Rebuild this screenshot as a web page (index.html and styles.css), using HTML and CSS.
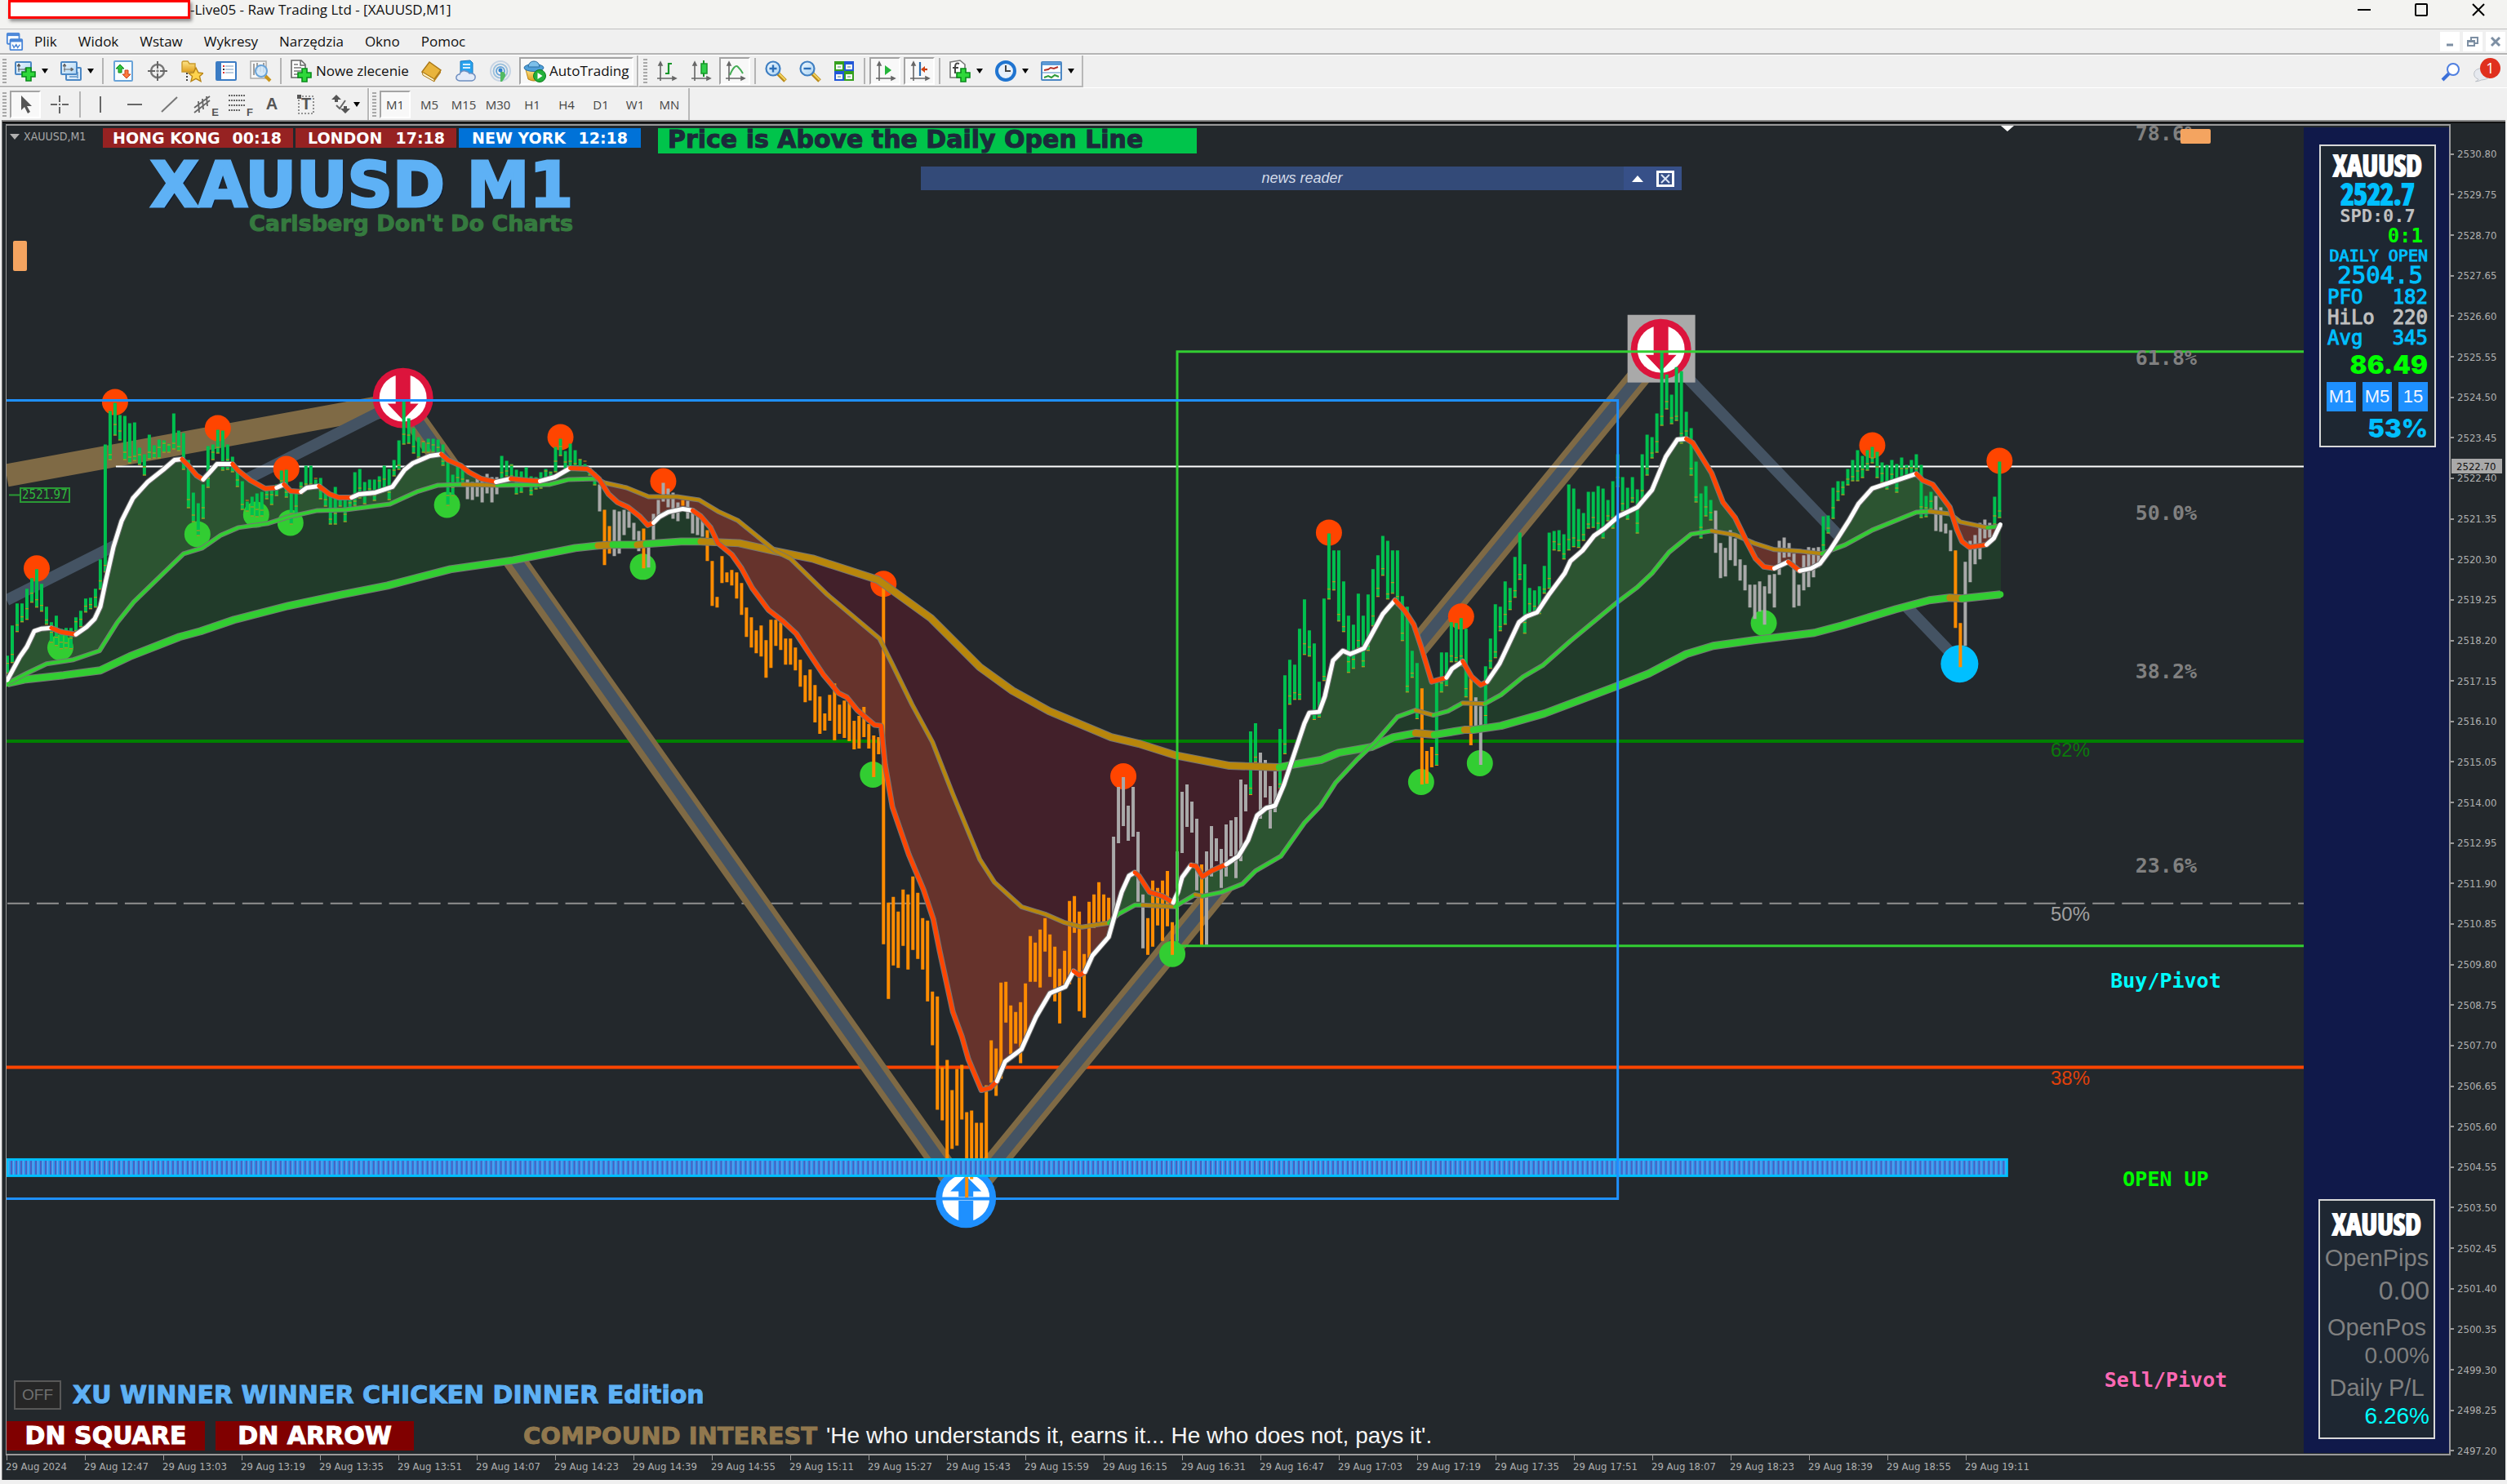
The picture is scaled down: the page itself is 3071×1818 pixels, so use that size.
FILE: index.html
```html
<!DOCTYPE html>
<html lang="pl">
<head>
<meta charset="utf-8">
<title>Live05 - Raw Trading Ltd - [XAUUSD,M1]</title>
<link rel="stylesheet" href="styles.css">
</head>
<body>
<svg class="symbols" aria-hidden="true">
  <defs>
    <linearGradient id="gold" x1="0" y1="0" x2="0" y2="1"><stop offset="0" stop-color="#ffe68a"/><stop offset="1" stop-color="#e0a020"/></linearGradient>
    <linearGradient id="sky" x1="0" y1="0" x2="1" y2="1"><stop offset="0" stop-color="#f2faff"/><stop offset="1" stop-color="#a9d2f3"/></linearGradient>
    <symbol id="plus" viewBox="0 0 18 18"><path d="M6 1h6v5h5v6h-5v5H6v-5H1V6h5z" fill="#2fd83a" stroke="#0a8a1c" stroke-width="1.6"/></symbol>
    <symbol id="i-app" viewBox="0 0 24 24"><rect x="2" y="1" width="16" height="14" rx="1" fill="#fff" stroke="#4a86d8" stroke-width="2"/><path d="M2 3h16" stroke="#4a86d8" stroke-width="3"/><rect x="6" y="9" width="16" height="14" rx="1" fill="#fff" stroke="#4a86d8" stroke-width="2"/><path d="M6 11h16" stroke="#4a86d8" stroke-width="3"/><path d="M9 16l2 4 3-4 2 4 3-4" fill="none" stroke="#4a86d8" stroke-width="1.6"/></symbol>
    <symbol id="i-newchart" viewBox="0 0 28 28"><rect x="2" y="3" width="19" height="15" rx="1" fill="url(#sky)" stroke="#4b87c4" stroke-width="2"/><path d="M6 6v9M5 12h11M6 5l-2 3h4zM17 12l-3-2v4z" fill="#555" stroke="#555"/><use href="#plus" x="9" y="9" width="18" height="18"/></symbol>
    <symbol id="i-profiles" viewBox="0 0 28 28"><rect x="8" y="10" width="18" height="15" rx="1" fill="#dcecf9" stroke="#4b87c4" stroke-width="2"/><path d="M12 21h10M22 15v8" stroke="#7aa9d6" stroke-width="2"/><rect x="2" y="3" width="19" height="15" rx="1" fill="url(#sky)" stroke="#4b87c4" stroke-width="2"/><path d="M6 6v9M5 12h11M6 5l-2 3h4zM17 12l-3-2v4z" fill="#666" stroke="#666"/></symbol>
    <symbol id="i-market" viewBox="0 0 28 28"><rect x="3" y="2" width="22" height="24" rx="1" fill="#f8fcff" stroke="#69a3d8" stroke-width="2"/><path d="M10 6l5 5h-3v5H8v-5H5z" fill="#30c23a" stroke="#108a1c"/><path d="M18 23l-5-5h3v-5h4v5h3z" fill="#ff7a3c" stroke="#c8401a"/></symbol>
    <symbol id="i-cross" viewBox="0 0 28 28"><circle cx="14" cy="14" r="8" fill="none" stroke="#777" stroke-width="2.4"/><path d="M14 2v9M14 17v9M2 14h9M17 14h9" stroke="#666" stroke-width="2"/><path d="M12 14h4M14 12v4" stroke="#666" stroke-width="1"/></symbol>
    <symbol id="i-fav" viewBox="0 0 28 28"><path d="M2 4q0-2 2-2h5l2 3h7v10H2z" fill="url(#gold)" stroke="#c99a2c" stroke-width="1.4"/><path d="M8 16v10" stroke="#444" stroke-width="2" stroke-dasharray="2 2"/><path d="M19 10l3 6 6 .6-4.500 4 1.500 6-6-3.200-6 3.200 1.500-6-4.500-4 6-.6z" fill="#ffd34d" stroke="#b98516" stroke-width="1.400"/></symbol>
    <symbol id="i-nav" viewBox="0 0 28 28"><rect x="2" y="3" width="24" height="22" rx="1" fill="#fff" stroke="#3b7cc4" stroke-width="2"/><path d="M3 4h5v20H3z" fill="#3b7cc4"/><path d="M13 8h10M13 12h10M13 16h10" stroke="#bcd" stroke-width="2"/><path d="M10 8h2M10 16h2" stroke="#d33" stroke-width="2"/><path d="M10 12h2" stroke="#333" stroke-width="2"/></symbol>
    <symbol id="i-tester" viewBox="0 0 28 28"><rect x="2" y="2" width="19" height="21" fill="#f7f7f7" stroke="#aaa" stroke-width="1.500"/><path d="M6 5v14M10 4v10M14 6v9M18 4v12" stroke="#888" stroke-width="1.600"/><path d="M20 20l6 6" stroke="#c8941c" stroke-width="4"/><circle cx="15" cy="14" r="7" fill="#cfe6fa" fill-opacity=".85" stroke="#69a3d8" stroke-width="2"/></symbol>
    <symbol id="i-order" viewBox="0 0 28 28"><path d="M2 1h12l5 5v16H2z" fill="#fff" stroke="#666" stroke-width="1.600"/><path d="M13 1v6h6" fill="none" stroke="#666" stroke-width="1.500"/><path d="M5 6h5M5 10h9M5 14h9M5 18h5" stroke="#777" stroke-width="1.600"/><use href="#plus" x="9" y="10" width="18" height="18"/></symbol>
    <symbol id="i-book" viewBox="0 0 28 28"><path d="M2 15L11 3l14 10-8 11z" fill="#e9b43c" stroke="#a97818" stroke-width="1.400"/><path d="M2 15l15 9v3L3 19z" fill="#fff3c8" stroke="#a97818"/><path d="M17 24l8-11v3l-8 11z" fill="#b8801a"/></symbol>
    <symbol id="i-cloud" viewBox="0 0 28 28"><path d="M7 2l12-1 3 3v14H7z" fill="#29a3ee" stroke="#1a78bf"/><path d="M10 6h9M10 10h9" stroke="#d8f0ff" stroke-width="2"/><path d="M6 26q-5-1-4-5 1-3 4-3 2-5 7-4 4 1 5 3 5-1 7 3 1 5-4 6z" fill="#e3ebf8" stroke="#6f8fc0" stroke-width="1.500"/></symbol>
    <symbol id="i-signal" viewBox="0 0 28 28"><circle cx="14" cy="14" r="12" fill="none" stroke="#c6d4e4" stroke-width="2"/><circle cx="14" cy="14" r="8.500" fill="none" stroke="#9cc0dc" stroke-width="2"/><circle cx="14" cy="14" r="5" fill="none" stroke="#6aa6d8" stroke-width="2"/><path d="M14 14q11 2 2 13h-2z" fill="#52ba62"/><circle cx="14" cy="13" r="2.500" fill="#2f7fca"/></symbol>
    <symbol id="i-auto" viewBox="0 0 28 28"><path d="M3 12h20l-3 12q-7 4-14 0z" fill="url(#gold)" stroke="#b98516"/><ellipse cx="13" cy="10" rx="12" ry="4.500" fill="#4f9fd8" stroke="#2c6fa4"/><path d="M6 9q1-7 7-7t7 7z" fill="#7cc0ea" stroke="#2c6fa4"/><circle cx="20" cy="20" r="7.500" fill="#24b13a" stroke="#0c7a1e"/><path d="M17.500 16v8l6-4z" fill="#fff"/></symbol>
    <symbol id="axes" viewBox="0 0 28 28"><path d="M7 4v22M3 23h22M7 3l-2 4h4zM26 23l-4-2v4z" fill="#666" stroke="#666" stroke-width="1.600"/></symbol>
    <symbol id="i-bars" viewBox="0 0 28 28"><use href="#axes"/><path d="M17 4v14M17 5h4M13 17h4" stroke="#17962a" stroke-width="2.200"/></symbol>
    <symbol id="i-candle" viewBox="0 0 28 28"><use href="#axes"/><path d="M18 1v20" stroke="#17962a" stroke-width="2"/><rect x="15" y="5" width="7" height="12" fill="#2fd04a" stroke="#17962a" stroke-width="1.500"/></symbol>
    <symbol id="i-line" viewBox="0 0 28 28"><use href="#axes"/><path d="M8 19q6-14 10-10t6 8" fill="none" stroke="#44ad55" stroke-width="2"/></symbol>
    <symbol id="lens" viewBox="0 0 28 28"><path d="M17 17l9 9" stroke="#b98a1a" stroke-width="5"/><path d="M18 17l8 8" stroke="#f4d35e" stroke-width="2"/><circle cx="11" cy="11" r="8.500" fill="url(#sky)" stroke="#3f7fc2" stroke-width="2.200"/></symbol>
    <symbol id="i-zoomin" viewBox="0 0 28 28"><use href="#lens"/><path d="M6.500 11h9M11 6.500v9" stroke="#2d6fb8" stroke-width="2.400"/></symbol>
    <symbol id="i-zoomout" viewBox="0 0 28 28"><use href="#lens"/><path d="M6.500 11h9" stroke="#2d6fb8" stroke-width="2.400"/></symbol>
    <symbol id="i-tile" viewBox="0 0 28 28"><path d="M2 2h12v12H2zM14 14h12v12H14z" fill="#35a01e"/><path d="M14 2h12v12H14zM2 14h12v12H2z" fill="#2257d8"/><path d="M4 6h8v6H4zM16 6h8v6h-8zM4 18h8v6H4zM16 18h8v6h-8z" fill="#f6fbf2"/><path d="M6 9h4M18 9h4M6 21h4M18 21h4" stroke="#8aa" stroke-width="1.500"/></symbol>
    <symbol id="i-scroll" viewBox="0 0 28 28"><use href="#axes"/><path d="M14 7l8 6-8 6z" fill="#25b53a"/></symbol>
    <symbol id="i-shift" viewBox="0 0 28 28"><use href="#axes"/><path d="M15 3v17" stroke="#2a6db0" stroke-width="2.200"/><path d="M24 12h-6" stroke="#c23a10" stroke-width="2.200"/><path d="M16 12l5-4v8z" fill="#d2420f"/></symbol>
    <symbol id="i-ind" viewBox="0 0 28 28"><path d="M2 3l12-2 6 5v16H2z" fill="#fff" stroke="#777" stroke-width="1.600"/><path d="M13 5q-5-2-5 4v8M5 10h7" fill="none" stroke="#444" stroke-width="2"/><use href="#plus" x="9" y="10" width="18" height="18"/></symbol>
    <symbol id="i-clock" viewBox="0 0 28 28"><circle cx="14" cy="14" r="11" fill="#e8f0fa" stroke="#1f74d0" stroke-width="4"/><path d="M14 7v7h6" fill="none" stroke="#444" stroke-width="2"/></symbol>
    <symbol id="i-tmpl" viewBox="0 0 28 28"><rect x="2" y="3" width="24" height="22" rx="1" fill="#fff" stroke="#4b87c4" stroke-width="2"/><path d="M3 5h22" stroke="#5d9ad6" stroke-width="4"/><path d="M5 13l5-1 3-2 4 1 5-2" fill="none" stroke="#b3322a" stroke-width="2"/><path d="M3 16h22" stroke="#4b87c4"/><path d="M5 22l5-2 4 2 4-3 5 2" fill="none" stroke="#2f9a3a" stroke-width="2"/></symbol>
    <symbol id="i-cursor" viewBox="0 0 28 28"><path d="M9 3v18l4-4 4 8 3-2-4-7h6z" fill="#555"/></symbol>
    <symbol id="i-plus" viewBox="0 0 28 28"><path d="M14 3v8M14 17v8M3 14h8M17 14h8M13 14h2" stroke="#666" stroke-width="2"/></symbol>
    <symbol id="i-v" viewBox="0 0 28 28"><path d="M14 4v20" stroke="#666" stroke-width="2"/></symbol>
    <symbol id="i-h" viewBox="0 0 28 28"><path d="M5 14h18" stroke="#666" stroke-width="2"/></symbol>
    <symbol id="i-t" viewBox="0 0 28 28"><path d="M5 23L24 5" stroke="#777" stroke-width="2"/></symbol>
    <symbol id="i-e" viewBox="0 0 28 28"><path d="M3 18L22 4M3 24L22 9M8 10l1 14M13 7l1 13M18 4l1 12" stroke="#666" stroke-width="1.800"/></symbol>
    <symbol id="i-f" viewBox="0 0 28 28"><path d="M3 3h21M3 9h21M3 15h21M3 21h14" stroke="#666" stroke-width="1.800" stroke-dasharray="2 1"/></symbol>
    <symbol id="i-box" viewBox="0 0 28 28"><rect x="5" y="4" width="18" height="21" fill="none" stroke="#777" stroke-width="1.600" stroke-dasharray="2 2"/><path d="M3 2h5v5H3z" fill="#555"/></symbol>
    <symbol id="i-arr" viewBox="0 0 28 28"><path d="M9 2l6 6H3zM7 8h4v3H7zM20 25l-6-6h12zM18 16h4v4h-4z" fill="#555"/><path d="M9 15l4 4 7-10" fill="none" stroke="#666" stroke-width="2"/></symbol>
  </defs>
</svg>

<header class="titlebar">
  <span class="redacted"></span>
  <h1 class="title">-Live05 - Raw Trading Ltd - [XAUUSD,M1]</h1>
  <div class="winctl">
    <button aria-label="Minimize"><svg viewBox="0 0 16 16"><path d="M0 8h16"/></svg></button>
    <button aria-label="Maximize"><svg viewBox="0 0 16 16"><rect x="1" y="1" width="14" height="14" rx="1"/></svg></button>
    <button aria-label="Close"><svg viewBox="0 0 16 16"><path d="M1 1l14 14M15 1L1 15"/></svg></button>
  </div>
</header>

<nav class="menubar">
  <svg class="appicon"><use href="#i-app"/></svg>
  <button>Plik</button><button>Widok</button><button>Wstaw</button><button>Wykresy</button><button>Narzędzia</button><button>Okno</button><button>Pomoc</button>
  <div class="mdi">
    <button aria-label="Minimize chart"><svg viewBox="0 0 14 14"><path d="M3 11h8" stroke-width="3"/></svg></button>
    <button aria-label="Restore chart"><svg viewBox="0 0 14 14"><path d="M5 5V2h8v7h-3M1 6h8v6H1zM1 7h8" stroke-width="2"/></svg></button>
    <button aria-label="Close chart"><svg viewBox="0 0 14 14"><path d="M2 2l10 10M12 2L2 12" stroke-width="3"/></svg></button>
  </div>
</nav>

<div class="toolbar">
  <div class="group">
    <i class="grip"></i>
    <button class="tool drop" aria-label="New chart"><svg><use href="#i-newchart"/></svg></button>
    <button class="tool drop" aria-label="Profiles"><svg><use href="#i-profiles"/></svg></button>
    <i class="sep"></i>
    <button class="tool" aria-label="Market watch"><svg><use href="#i-market"/></svg></button>
    <button class="tool" aria-label="Data window"><svg><use href="#i-cross"/></svg></button>
    <button class="tool" aria-label="Navigator"><svg><use href="#i-fav"/></svg></button>
    <button class="tool" aria-label="Terminal"><svg><use href="#i-nav"/></svg></button>
    <button class="tool" aria-label="Strategy tester"><svg><use href="#i-tester"/></svg></button>
    <i class="sep"></i>
    <button class="tool wide order"><svg><use href="#i-order"/></svg>Nowe zlecenie</button>
    <button class="tool" aria-label="MetaEditor"><svg><use href="#i-book"/></svg></button>
    <button class="tool" aria-label="Cloud"><svg><use href="#i-cloud"/></svg></button>
    <button class="tool" aria-label="Signals"><svg><use href="#i-signal"/></svg></button>
    <button class="tool wide on"><svg><use href="#i-auto"/></svg>AutoTrading</button>
  </div>
  <div class="group">
    <i class="grip"></i>
    <button class="tool" aria-label="Bar chart"><svg><use href="#i-bars"/></svg></button>
    <button class="tool" aria-label="Candlesticks"><svg><use href="#i-candle"/></svg></button>
    <button class="tool on" aria-label="Line chart"><svg><use href="#i-line"/></svg></button>
    <i class="sep"></i>
    <button class="tool" aria-label="Zoom in"><svg><use href="#i-zoomin"/></svg></button>
    <button class="tool" aria-label="Zoom out"><svg><use href="#i-zoomout"/></svg></button>
    <button class="tool" aria-label="Tile windows"><svg><use href="#i-tile"/></svg></button>
    <i class="sep"></i>
    <button class="tool on" aria-label="Auto scroll"><svg><use href="#i-scroll"/></svg></button>
    <button class="tool on" aria-label="Chart shift"><svg><use href="#i-shift"/></svg></button>
    <i class="sep"></i>
    <button class="tool drop" aria-label="Indicators"><svg><use href="#i-ind"/></svg></button>
    <button class="tool drop" aria-label="Periods"><svg><use href="#i-clock"/></svg></button>
    <button class="tool drop" aria-label="Templates"><svg><use href="#i-tmpl"/></svg></button>
  </div>
  <div class="alerts">
    <button aria-label="Search"><svg viewBox="0 0 24 24"><path d="M2 22l8-8" stroke="#3a6fd8" stroke-width="4"/><circle cx="15" cy="9" r="7" fill="#fff" stroke="#4f7fe0" stroke-width="2"/></svg></button>
    <button class="chat" aria-label="Messages"><svg viewBox="0 0 30 26"><path d="M4 22q4-1 4-3Q1 16 2 10T14 3q11 0 11 8t-13 9q-4 2-8 2z" fill="#e6e9ef" stroke="#b4b8c0"/></svg><b class="badge">1</b></button>
  </div>
</div>

<div class="toolbar second">
  <div class="group">
    <i class="grip"></i>
    <button class="tool on" aria-label="Cursor"><svg><use href="#i-cursor"/></svg></button>
    <button class="tool" aria-label="Crosshair"><svg><use href="#i-plus"/></svg></button>
    <i class="sep"></i>
    <button class="tool" aria-label="Vertical line"><svg><use href="#i-v"/></svg></button>
    <button class="tool" aria-label="Horizontal line"><svg><use href="#i-h"/></svg></button>
    <button class="tool" aria-label="Trend line"><svg><use href="#i-t"/></svg></button>
    <button class="tool" aria-label="Channel"><svg><use href="#i-e"/></svg><small>E</small></button>
    <button class="tool" aria-label="Fibonacci"><svg><use href="#i-f"/></svg><small>F</small></button>
    <button class="tool letter">A</button>
    <button class="tool letter boxed" aria-label="Text label"><svg><use href="#i-box"/></svg><b>T</b></button>
    <button class="tool drop short" aria-label="Arrows"><svg><use href="#i-arr"/></svg></button>
  </div>
  <div class="group periods">
    <i class="grip"></i>
    <button class="tool on">M1</button><button class="tool">M5</button><button class="tool">M15</button><button class="tool">M30</button><button class="tool">H1</button><button class="tool">H4</button><button class="tool">D1</button><button class="tool">W1</button><button class="tool">MN</button>
  </div>
</div>

<main class="chart">
  <section class="plot">
    <svg class="canvas" id="canvas" viewBox="7 153 2994 1629" preserveAspectRatio="none"></svg>
    <div id="levels"></div>
    <span class="pricetag">2521.97</span>
    <i class="handle left"></i><i class="handle right"></i><i class="shiftmark"></i>

    <div class="hud-top">
      <span class="sym">XAUUSD,M1</span>
      <div class="clocks">
        <span class="clock closed hk"><span>HONG KONG</span><span>00:18</span></span>
        <span class="clock closed ldn"><span>LONDON</span><span>17:18</span></span>
        <span class="clock open ny"><span>NEW YORK</span><span>12:18</span></span>
      </div>
      <span class="bias">Price is Above the Daily Open Line</span>
    </div>
    <div class="brand">
      <h2>XAUUSD M1</h2>
      <p>Carlsberg Don't Do Charts</p>
    </div>
    <div class="news">
      <em>news reader</em>
      <button aria-label="Collapse"><svg viewBox="0 0 16 16"><path d="M8 4l7 8H1z" fill="#fff"/></svg></button>
      <button aria-label="Close news"><svg viewBox="0 0 22 20"><path d="M1.500 1.500h19v17h-19z" fill="none" stroke="#fff" stroke-width="3"/><path d="M6 5l10 10M16 5L6 15" stroke="#dde6f5" stroke-width="2"/></svg></button>
    </div>
    <div class="hud-bottom">
      <div class="line"><button class="off">OFF</button><strong class="edition">XU WINNER WINNER CHICKEN DINNER Edition</strong></div>
      <div class="line">
        <button class="dn">DN SQUARE</button><button class="dn">DN ARROW</button>
        <strong class="compound">COMPOUND INTEREST</strong><q class="quote">'He who understands it, earns it... He who does not, pays it'.</q>
      </div>
    </div>

    <aside class="side">
      <div class="panel">
        <strong class="impact">XAUUSD</strong>
        <strong class="impact price">2522.7</strong>
        <span class="spd">SPD:0.7</span>
        <span class="ratio">0:1</span>
        <span class="dopen">DAILY OPEN</span>
        <span class="dval">2504.5</span>
        <span class="pair blue"><span>PFO</span><span>182</span></span>
        <span class="pair"><span>HiLo</span><span>220</span></span>
        <span class="pair blue"><span>Avg</span><span>345</span></span>
        <strong class="score">86.49</strong>
        <span class="tfs"><button>M1</button><button>M5</button><button>15</button></span>
        <strong class="pct">53%</strong>
      </div>
      <div class="panel account">
        <strong class="impact">XAUUSD</strong>
        <span class="cap">OpenPips</span>
        <span class="lcd big">0.00</span>
        <span class="cap">OpenPos</span>
        <span class="lcd">0.00%</span>
        <span class="cap">Daily P/L</span>
        <span class="lcd gain">6.26%</span>
      </div>
    </aside>
  </section>
  <ol class="prices" id="prices"></ol>
  <ol class="times" id="times"></ol>
</main>
<script src="chart.js"></script>
</body>
</html>
```
FILE: styles.css
```css
* { box-sizing: border-box; }
body {
  margin: 0; min-height: 100vh; display: flex; flex-direction: column;
  background: #f0f0f0; font-family: "Open Sans", "Noto Sans", sans-serif; font-size: 17px; color: #111;
}
button { font: inherit; color: inherit; background: none; border: 0; padding: 0; margin: 0; }
ol { list-style: none; margin: 0; padding: 0; }
.symbols { position: absolute; width: 0; height: 0; }

.titlebar { display: flex; height: 36px; background: #f3f3f1; border-bottom: 1px solid #c0c0c0; padding-left: 10px; }
.redacted { width: 223px; height: 23px; background: #fff; border: 3px solid #f00; box-shadow: 2px 3px 4px #888; }
.title { margin: 0; font-size: 17px; line-height: 24px; font-weight: 400; flex: 1; }
.winctl { display: flex; }
.winctl button { width: 70px; height: 24px; }
.winctl svg { width: 16px; height: 16px; fill: none; stroke: #000; stroke-width: 2; display: block; margin: 0 auto; }

.menubar { display: flex; align-items: center; height: 31px; gap: 26px; padding: 0 2px 0 7px; border-bottom: 2px solid #b4b4b4; line-height: 24px; }
.appicon { width: 22px; height: 24px; margin-right: -13px; }
.mdi { margin-left: auto; display: flex; gap: 4px; }
.mdi button { width: 24px; height: 24px; background: #fff; }
.mdi svg { width: 14px; height: 14px; display: block; margin: 0 auto; fill: none; stroke: #7d8fa3; }

.toolbar { display: flex; height: 40px; border-top: 1px solid #fff; }
.group { position: relative; z-index: 0; display: flex; align-items: center; border-right: 2px solid #b8b8b8; border-bottom: 2px solid #b8b8b8; padding-right: 2px; }
.toolbar .group:first-child { padding-left: 3px; }
.group + .group { padding-left: 5px; border-left: 1px solid #fff; }
.second .group + .group { padding-left: 3px; }
.second .group { border-bottom: 0; }
.grip { width: 5px; height: 30px; margin-right: 2px; background: repeating-linear-gradient(#a8a8a8 0 2px, transparent 2px 4px); }
.sep { width: 2px; height: 32px; margin: 0 3px; background: #b4b4b4; }
.tool { width: 42px; height: 34px; display: flex; align-items: center; justify-content: center; position: relative; }
.tool svg { width: 28px; height: 28px; }
.tool.on::before { content: ""; position: absolute; inset: 0 2px; border: 2px solid; border-color: #a4a4a4 #fff #fff #a4a4a4; background: #f8f8f8; z-index: -1; }
.tool.drop { width: 56px; justify-content: flex-start; padding-left: 7px; gap: 6px; }
.tool.drop::after { content: ""; border: 4px solid transparent; border-top: 6px solid #000; border-bottom: 0; }
.tool.short { width: 52px; gap: 2px; }
.tool.wide { width: auto; padding: 0 7px; gap: 4px; }
.tool small { position: absolute; right: 2px; bottom: 0; font: 700 13px "Liberation Sans", sans-serif; color: #555; }
.tool.letter { font: 700 20px "Liberation Sans", sans-serif; color: #555; }
.boxed b { position: absolute; }
.periods { font-size: 15px; color: #444; }
.alerts { margin-left: auto; display: flex; gap: 14px; padding-right: 8px; align-items: center; }
.alerts svg { width: 26px; height: 24px; display: block; }
.chat { position: relative; width: 34px; }
.chat svg { margin-top: 8px; }
.badge { position: absolute; right: 0; top: -1px; width: 25px; height: 25px; border-radius: 50%; background: #e0301e; color: #fff; font: 400 18px/25px "Open Sans", sans-serif; }

.chart {
  flex: 1; display: grid; grid-template-columns: 1fr 67px; grid-template-rows: 1fr 30px;
  margin: 0 2px 5px 2px; padding: 3px 0 0 4px; min-height: 0;
  background: #23282c; border-top: 2px solid #8a8a8a; border-left: 1px solid #777; box-shadow: inset 0 2px #111;
}
.plot { position: relative; border: 2px solid #9a9a9a; border-left-width: 1px; overflow: hidden; }
.canvas { position: absolute; inset: 0; width: 100%; height: 100%; }
.prices, .times { font: 13px "DejaVu Sans Condensed", "DejaVu Sans", sans-serif; color: #b0b0b0; }
.prices { grid-column: 2; grid-row: 1 / 3; display: flex; flex-direction: column; padding: 12px 0 11px; position: relative; }
.prices li { flex: 1; display: flex; align-items: center; gap: 4px; }
.prices li::before { content: ""; width: 4px; height: 2px; background: #9a9a9a; }
.prices .last { position: absolute; right: 4px; width: 62px; height: 18px; background: #a9a9a9; color: #111; padding-left: 6px; }
.prices .last::before { display: none; }
.times { grid-column: 1; grid-row: 2; display: flex; overflow: hidden; white-space: nowrap; }
.times li { flex: 0 0 96px; padding-top: 6px; position: relative; }
.times li::before { content: ""; position: absolute; left: 1px; top: 0; width: 1px; height: 6px; background: #9a9a9a; }

.level { position: absolute; transform: translateY(-50%); }
.fib { right: 309px; font: 700 25px/26px "DejaVu Sans Mono", monospace; color: #808080; }
.zone { right: 440px; font: 24px/26px "Liberation Sans", sans-serif; }
.pivot { right: 207px; width: 280px; text-align: center; font: 700 25px/26px "DejaVu Sans Mono", monospace; }
.pricetag { position: absolute; left: 16px; top: 443px; height: 19px; padding: 0 1px; border: 2px solid #2a9a35; color: #2fb83c; font: 15px/15px "DejaVu Sans Condensed", "DejaVu Sans", sans-serif; }
.handle { position: absolute; background: #f4a460; border-radius: 2px; }
.handle.left { left: 8px; top: 141px; width: 17px; height: 37px; }
.handle.right { right: 292px; top: 4px; width: 37px; height: 18px; }
.shiftmark { position: absolute; right: 533px; top: 0; border: 8px solid transparent; border-top: 7px solid #fff; border-bottom: 0; }

.hud-top { position: absolute; left: 4px; top: 3px; display: flex; align-items: flex-start; }
.sym { width: 114px; font: 14px/20px "DejaVu Sans Condensed", "DejaVu Sans", sans-serif; color: #a8a8a8; display: flex; align-items: center; gap: 5px; }
.sym::before { content: ""; border: 6px solid transparent; border-top: 7px solid #b0b0b0; border-bottom: 0; }
.clocks { display: flex; gap: 3px; }
.clock, .bias, .brand, .edition, .dn, .compound { font-family: "DejaVu Sans", sans-serif; font-weight: 700; white-space: nowrap; -webkit-text-stroke-width: 1px; }
.clock { display: flex; justify-content: space-between; height: 24px; font-size: 19px; line-height: 24px; color: #fff; padding: 0 14px 0 12px; -webkit-text-stroke-width: 0; }
.closed { background: #962222; }
.open { background: #0072d8; }
.hk { width: 233px; }
.ldn { width: 197px; padding-left: 15px; }
.ny { width: 223px; padding: 0 16px; }
.bias { margin-left: 21px; width: 660px; height: 31px; padding-left: 12px; background: #00c44b; color: #1c2a3a; font-size: 30px; line-height: 27px; }
.brand { position: absolute; left: 170px; top: 36px; width: 524px; text-align: right; }
.brand h2 { margin: 0; font-size: 77px; line-height: 74px; color: #5eb1f5; text-shadow: 2px 2px #0b1a33; -webkit-text-stroke-width: 3px; }
.brand p { margin: 0; font-size: 27px; line-height: 20px; color: #357a3f; }
.news { position: absolute; left: 1120px; top: 50px; width: 932px; height: 29px; display: flex; background: #334a78; }
.news em { flex: 1; padding-left: 73px; text-align: center; font: italic 18px/29px "Liberation Sans", sans-serif; color: #d3dbe8; }
.news button { width: 34px; background: #375088; display: grid; place-items: center; }
.news svg { width: 22px; height: 20px; }
.news button:nth-of-type(1) svg { width: 16px; height: 16px; }
.news button + button { width: 37px; padding-right: 4px; }
.hud-bottom { position: absolute; left: 0; bottom: 4px; display: flex; flex-direction: column; gap: 14px; white-space: nowrap; }
.line { display: flex; align-items: center; height: 36px; }
.off { width: 58px; height: 36px; margin-left: 9px; border: 2px solid #585858; background: #262626; color: #707070; font: 19px "Liberation Sans", sans-serif; }
.edition { margin-left: 14px; font-size: 30px; line-height: 36px; color: #5eb1f5; text-shadow: 1px 2px #0b1a33; }
.dn { width: 243px; height: 36px; margin-right: 13px; background: #800000; color: #fff; font-size: 30px; line-height: 36px; }
.compound { margin-left: 121px; width: 361px; font-size: 29px; line-height: 36px; color: #91784e; }
.quote { quotes: none; margin-left: 10px; font: 28px/36px "Liberation Sans", sans-serif; color: #f5f5f5; }

.side { position: absolute; right: 0; top: 2px; bottom: 1px; width: 178px; background: #10194a; display: flex; flex-direction: column; justify-content: space-between; padding: 21px 16px 17px 19px; }
.panel { width: 143px; height: 371px; border: 2px solid #d8d8d8; background: #1e2732; padding: 6px 8px; display: flex; flex-direction: column; align-items: flex-end; font-family: "DejaVu Sans Mono", monospace; color: #c0c0c0; white-space: nowrap; }
.account { height: 294px; margin-left: -1px; padding: 11px 5px; font-family: "Liberation Sans", sans-serif; }
.impact { font: 700 35px/35px "Liberation Sans Narrow", "Open Sans Condensed", "Liberation Sans", sans-serif; color: #fff; align-self: center; -webkit-text-stroke: 2px; }
.price { color: #00bfff; }
.spd { font-size: 22px; line-height: 20px; align-self: center; font-weight: 700; }
.ratio { font-size: 24px; line-height: 29px; color: #0f0; font-weight: 700; padding-right: 6px; }
.dopen { font-size: 20px; line-height: 18px; color: #00bfff; -webkit-text-stroke: 1px; }
.dval { font-size: 29px; line-height: 30px; color: #00bfff; padding-right: 6px; -webkit-text-stroke: 1px; }
.pair { width: 100%; display: flex; justify-content: space-between; font-size: 24px; line-height: 25px; -webkit-text-stroke: 1px; }
.blue { color: #00bfff; }
.score, .pct { font: 900 31px/39px Inter, sans-serif; color: #0f0; }
.tfs { display: flex; gap: 8px; margin-top: 2px; }
.tfs button { width: 36px; height: 36px; background: #1e90ff; color: #f0f6ff; font: 22px "Liberation Sans", sans-serif; }
.tfs + .pct { color: #00bfff; line-height: 42px; }
.cap { font-size: 29px; line-height: 42px; color: #808080; align-self: center; }
.account .impact + .cap { margin-top: 3px; }
.lcd { font-size: 28px; line-height: 28px; margin-bottom: 4px; color: #808080; }
.lcd.big { font-size: 32px; line-height: 38px; margin-bottom: 5px; }
.lcd.gain { color: #0ff; }
```
FILE: chart.js
```js
// One bar per minute, 6 units apart. Each segment lists colour + high-low,
// measured from its own origin y0 with its own scale.
const segments = [
  { y0: 440, k: 3, bars: `g1090-1155 g978-1115 g897-1002 g897-967 g842-957 g803-893 g770-912 g825-927 g910-975 g965-1040 g942-1052 g990-1065 g987-1063 g987-1066 g947-1000 g924-985 g879-930 g875-917 g843-913 g735-845 g312-782 g190-370 g160-278 g204-296 g208-370 g235-382 g230-372 g324-386 g347-427 g275-365 g315-362 g293-363 g298-342 g310-342 g199-330 g262-337 g270-405 g370-545 g490-598 g527-648 g460-585 g317-472 g312-370 g257-345 g262-408 g312-405 g357-414 g395-467 g447-553 g522-557 g504-577 g492-578 g487-576 g465-513 g475-534 g460-502 g408-470 g406-508 g485-607 g490-572 g450-494 g389-480 g389-475 g441-475 g436-514 g490-540 g495-607 g468-605 g500-540 g505-597 g505-550 g415-536 g402-510 g451-530 g442-500 g442-520 g429-487 g389-475 g402-517 g370-430 g298-404 g150-312 g216-310 g252-346 g286-377 g303-342 g290-342 g290-342 g295-345 g312-390 g370-538 g422-500 g382-460 g400-460 s440-513 s450-517 s433-503 s447-526 s420-492 s432-526 s432-495 g355-440 g373-430 g384-430 g406-495 g410-490 g397-460 g430-498 g432-477 g415-475 g402-435 g410-435 g320-415 g290-355 g335-405 g310-395 g334-400 g366-405 g385-405 g400-425 g415-462 s460-558` },
  { y0: 560, k: 1.633, bars: `o105-215 o137-193 s105-198 s107-192 s105-155 s107-140 s130-165 s147-188 o142-222 s180-220 s112-165 s85-118 s50-88 s62-100 s70-122 s90-127 o85-97 s87-122 s105-152 s112-155 s122-158 o145-207 o207-297 o280-300 o198-252 o230-250 o225-257 o230-283 o252-315 o300-360 o320-380 o347-392 o336-398 o365-441 o325-421 o325-378 o330-385 o363-414 o363-414 o380-427 o405-459 o436-490 o425-487 o456-530 o478-554 o512-547 o475-527 o453-567 o495-554 o487-562 o490-568 o527-585 o517-583 o500-560 o534-583 o557-640 o560-595 o262-975 o892-1085 o880-1018 o909-1022 o865-978 o875-1025 o839-986 o872-1005 o922-1026 o928-1090 o1069-1177 o1079-1306 o1222-1328 o1206-1410 o1267-1385 o1225-1378 o1216-1326 o1311-1482 o1308-1445 o1333-1412 o1333-1408 o1258-1408 o1168-1253 o1184-1279 o1052-1245 o1050-1132 o1098-1195 o1110-1174 o1091-1213 o1053-1165 o958-1050 o972-1050 o946-1061 o922-990 o956-1040 o980-1089 o1024-1133 o988-1065 o889-1055 o878-952 o909-1108 o995-1122 o890-1003 o875-943 o850-930 o875-930 o882-930 s760-920 s660-773 s640-738 s697-767 s660-760 s750-890` },
  { y0: 620, k: 2.613, bars: `s1243-1415 o1320-1438 o1200-1412 o1223-1342 o1200-1392 o1168-1345 o1332-1438 s1105-1392 s914-1110 s890-1027 s946-1044 s1000-1232 o1147-1405 s1105-1405 s1023-1185 s1063-1137 s1098-1224 s1020-1185 s1005-1122 s996-1192 s875-1137 s890-976 g721-925 g695-820 s788-1000 s812-934 s895-1032 s850-980 g714-905 g541-795 g490-635 g506-620 g392-620 g299-475 g397-482 g440-685 g561-678 g294-560 g87-299 g141-270 g141-369 g240-403 g349-532 g380-521 g279-455 g349-514 g283-463 g200-385 g158-290 g95-223 g110-299 g141-280 g141-318 g287-431 g321-596 g463-549 g503-682 o584-890 o785-888 o772-835 g560-830 g467-596 g467-576 g372-500 g373-498 g357-512 g392-611 o550-765 s612-705 s640-828 g511-700 g423-521 g314-487 g321-400 g240-380 g260-333 g161-293 g84-235 g185-407 g260-342 g268-345 g255-345 g192-280 g83-265 g78-140 g75-143 g90-171` },
  { y0: 370, k: 2.613, bars: `g584-795 g596-783 g661-787 g674-762 g606-724 g606-720 g588-735 g596-755 g633-700 g571-725 g487-590 g560-670 g592-695 g560-640 g598-740 g486-630 g423-555 g430-499 g355-481 g160-395 g231-343 g294-389 g207-378 g219-453 g351-440 g402-555 g510-640 g611-755 g587-684 g633-698 s666-802 s772-882 s787-878 s730-826 s755-845 s823-892 s842-923 s905-978 s905-1015 s893-990 s909-1033 s873-932 s869-978 s764-873 s752-818 s772-815 s805-978 s905-971 s810-923 s783-912 s787-880 s783-850 g685-800 g682-740 g592-692 g571-636 g571-616 g533-585 g505-573 g474-571 g490-562 g474-539 g462-515 g478-562 g513-577 g521-598 g505-570 g517-608 g497-565 g520-558 g505-552 g485-548 g520-690 g618-688 g606-660 s618-732 s655-735 s708-740 s728-798 o795-1042 o1026-1168 s830-1100 s764-896 s744-838 s706-822 s694-755 s705-752 g623-710 g510-690` }
];

// Moving averages: a letter switches the colour of what follows.
const fast = `w 8,833 23,805 32,792 41,773 50,770 62,769 o 74,774 92,777 w 105,768 115,758 122,743 129,710 138,670 148,638 162,610 180,590 199,575 213,563 222,562 o 230,570 240,582 248,587 w 258,576 265,568 284,568 o 291,576 306,588 324,598 338,597 w 347,593 o 355,601 368,602 w 375,597 390,595 o 403,605 414,609 430,609 w 439,605 459,603 480,596 495,575 505,567 526,558 540,556 o 548,563 564,570 574,578 589,586 607,590 w 625,586 o 645,588 661,589 w 679,584 698,573 o 719,574 722,576 733,586 745,605 756,615 769,621 783,632 793,643 800,640 w 807,633 818,627 836,623 848,625 o 858,632 870,646 879,665 896,679 908,696 921,720 941,747 959,761 975,776 990,799 1008,826 1027,849 1037,854 1050,870 1071,888 1079,889 1084,937 1093,989 1113,1047 1131,1090 1143,1126 1151,1166 1167,1240 1178,1270 1186,1298 1202,1336 1213,1333 1221,1325 w 1231,1301 1251,1286 1269,1246 1286,1217 1305,1209 1315,1190 o 1322,1195 1329,1191 w 1338,1171 1358,1148 1365,1123 1374,1093 1383,1073 1390,1069 o 1395,1073 1408,1093 1424,1098 1437,1106 w 1443,1093 1448,1075 1459,1060 o 1465,1061 1473,1074 1484,1067 1502,1059 w 1517,1049 1529,1029 1540,999 1551,990 1562,987 1573,961 1587,919 1598,886 1604,873 1616,872 1623,853 1633,809 1645,797 1654,801 1671,794 1694,752 1709,735 o 1721,748 1732,765 1741,792 1754,835 1772,830 w 1779,819 1792,810 o 1803,829 1814,839 1822,835 w 1837,813 1861,762 1870,755 1883,750 1897,729 1917,702 1924,687 1939,674 1953,656 1966,647 1983,632 2006,621 2024,600 2041,559 2055,538 2066,537 o 2074,542 2097,579 2111,615 2126,634 2140,663 2151,684 2161,694 2174,696 w 2191,688 o 2205,699 w 2219,696 2230,690 2242,674 2265,638 2277,617 2294,598 2315,591 2348,580 o 2356,588 2368,593 2389,621 2398,649 2404,663 2413,670 2434,667 w 2443,659 2451,642`;
const mid = `g 8,837 31,825 56,813 89,808 121,797 143,762 163,737 194,707 224,678 247,671 270,655 291,646 327,641 352,633 388,625 423,624 477,617 510,602 536,594 566,593 y 608,594 g 673,593 696,587 730,586 y 740,591 767,597 794,608 829,608 856,612 879,626 903,637 950,675 968,684 1013,728 1077,782 1093,814 1117,863 1142,909 1167,973 1200,1053 1218,1081 1251,1111 1280,1120 1303,1130 1325,1136 1358,1131 g 1370,1120 1390,1109 1399,1109 y 1439,1111 g 1464,1096 y 1473,1098 g 1497,1093 1522,1083 1538,1067 1569,1049 1598,1008 1618,987 1636,959 1663,930 1685,909 1712,878 1734,870 y 1756,876 g 1774,871 1792,861 y 1819,862 g 1839,851 1866,829 1890,815 1924,785 1982,737 2006,719 2024,702 2045,676 2072,654 2097,650 y 2126,655 2149,665 2174,673 2207,675 2232,678 g 2261,667 2294,649 2348,627 2364,626 y 2389,629 2402,639 2435,646 g 2451,644`;
const slow = `g 8,837 31,832 77,827 122,821 158,804 219,780 245,773 286,759 352,742 418,728 474,717 551,697 628,686 704,671 732,668 y 750,667 g 780,667 y 791,666 g 834,663 858,663 y 905,665 950,675 995,684 1075,710 1140,757 1200,817 1240,846 1285,871 1361,903 1395,911 1439,925 1506,938 1567,940 g 1582,937 1618,931 1640,922 1680,915 1707,903 1734,898 y 1757,900 g 1794,894 y 1805,894 g 1839,889 1892,874 1982,840 2020,825 2066,801 2099,791 2149,784 2223,775 2257,766 2323,746 2364,735 2389,732 y 2404,733 g 2451,728`;
const tint = { w: '#fff', o: '#ff4500', g: '#32cd32', y: '#b8860b' };

const highs = [[44,696],[140,492],[266,524],[350,574],[686,535],[812,589],[1082,715],[1376,951],[1628,652],[1790,755],[2294,545],[2450,564]];
const lows = [[73,793],[241,654],[313,630],[355,640],[547,618],[787,694],[1069,949],[1436,1169],[1741,958],[1813,935],[2161,763]];

const parse = s => {
  let c, out = [];
  for (const t of s.split(' ')) {
    if (tint[t]) c = t;
    else { const [x, y] = t.split(',').map(Number); out.push({ x, y, c }); }
  }
  return out;
};
const at = (pts, x) => {
  let i = 1;
  while (i < pts.length - 1 && pts[i].x < x) i++;
  const a = pts[i - 1], b = pts[i];
  return a.y + (b.y - a.y) * (x - a.x) / (b.x - a.x);
};
const F = parse(fast), M = parse(mid), S = parse(slow);

// Shade between two averages, split by which one is on top.
const cloud = (a, b, up, down) => {
  const d = { true: '', false: '' };
  for (let x = 8; x < 2452; x += 2) {
    const p = at(a, x), q = at(b, x);
    d[p < q] += `M${x} ${p}L${x + 2} ${at(a, x + 2)}V${at(b, x + 2)}L${x} ${q}Z`;
  }
  return `<g shape-rendering="crispEdges"><path d="${d[true]}" fill="${up}"/><path d="${d[false]}" fill="${down}"/></g>`;
};
const ribbon = (pts, w) => {
  const all = pts.map(p => `${p.x},${p.y}`).join(' ');
  let s = `<polyline points="${all}" fill="none" stroke="#757575" stroke-width="${w + 2}" stroke-linejoin="round"/>`;
  let i = 1;
  while (i < pts.length) {
    const c = pts[i].c; let run = [pts[i - 1]];
    while (i < pts.length && pts[i].c === c) run.push(pts[i++]);
    s += `<polyline points="${run.map(p => `${p.x},${p.y}`).join(' ')}" fill="none" stroke="${tint[c]}" stroke-width="${w}" stroke-linejoin="round" stroke-linecap="round"/>`;
  }
  return s;
};
const dot = (x, y, r, c) => `<circle cx="${x}" cy="${y}" r="${r}" fill="${c}"/>`;
const signalDown = (x, y) => `<g transform="translate(${x} ${y})">${dot(0, 0, 37, '#dc143c')}${dot(0, 0, 29, '#fff')}
  <path d="M-9 -31H9V7H19L0 27L-19 7H-9Z" fill="#dc143c"/></g>`;
const signalUp = (x, y) => `<g transform="translate(${x} ${y})">${dot(0, 0, 37, '#1e90ff')}${dot(0, 0, 29, '#fff')}
  <path d="M-9 31H9V-8H19L0 -27L-19 -8H-9ZM-30 -1H30V3H-30Z" fill="#1e90ff"/></g>`;

let bars = '', ticks = '', i = 0;
const paint = { g: ['', '#00c04e'], o: ['', '#ff8c00'], s: ['', '#a9a9a9'] };
for (const seg of segments) {
  for (const b of seg.bars.split(' ')) {
    const [hi, lo] = b.slice(1).split('-').map(v => Math.round(seg.y0 + v / seg.k));
    const x = 8 + 6 * i++;
    paint[b[0]][0] += `M${x} ${hi}V${lo}`;
    if (b[0] === 'g') ticks += `M${x} ${lo - 1}v1M${x} ${lo - 6 - (i * 7) % 9}v1`;
  }
}
for (const k in paint) bars += `<path d="${paint[k][0]}" stroke="${paint[k][1]}" stroke-width="4"/>`;
bars += `<path d="${ticks}" stroke="#e08a10" stroke-width="4"/>`;

document.getElementById('canvas').innerHTML = `
  <defs><pattern id="stripes" width="6" height="20" patternUnits="userSpaceOnUse">
    <rect width="6" height="20" fill="#2a9cf0"/><rect width="2" height="20" fill="#4a5fc0"/><rect x="3" width="1" height="20" fill="#6fa0ea"/></pattern></defs>
  <path d="M7 908H3001" stroke="#008000" stroke-width="4"/>
  <path d="M8 1107H3001" stroke="#909090" stroke-width="2" stroke-dasharray="27 9"/>
  <path d="M7 1308H3001" stroke="#ff4500" stroke-width="4"/>
  <path d="M7 582L493 493L1183 1468L2035 428" fill="none" stroke="#7f6a45" stroke-width="28"/>
  <path d="M7 735L493 490L1183 1468L2035 428L2402 812" fill="none" stroke="#445363" stroke-width="14"/>
  <path d="M141 571H3001" stroke="#fff" stroke-width="2"/>
  ${cloud(M, S, '#213b2a', '#42202a')}${cloud(F, M, '#2c5431', '#66332c')}
  ${highs.map(p => dot(...p, 16, '#ff4500')).join('')}${lows.map(p => dot(...p, 16, '#32cd32')).join('')}
  <rect x="1994" y="385" width="83" height="83" fill="#a9a9a9"/>
  ${signalDown(493, 487)}${signalDown(2035, 427)}${signalUp(1183, 1468)}
  ${dot(2401, 813, 23, '#00bfff')}
  ${bars}
  ${ribbon(S, 8)}${ribbon(M, 4)}${ribbon(F, 5)}
  <rect x="8" y="1421" width="2451" height="20" fill="url(#stripes)" stroke="#00bfff" stroke-width="3"/>
  <path d="M3001 430H1442V1159H3001" fill="none" stroke="#32cd32" stroke-width="3"/>
  <path d="M7 490H1982V1469H7" fill="none" stroke="#1e90ff" stroke-width="3"/>
  <path d="M10 606H24" stroke="#2a9a35" stroke-width="2"/>`;

const levels = [
  ['fib', '78.6%', 163], ['fib', '61.8%', 438], ['fib', '50.0%', 629], ['fib', '38.2%', 823], ['fib', '23.6%', 1061],
  ['zone', '62%', 919, '#0b7a0b'], ['zone', '50%', 1120, '#a0a0a0'], ['zone', '38%', 1321, '#e0400a'],
  ['pivot', 'Buy/Pivot', 1202, '#0ff'], ['pivot', 'OPEN UP', 1446, '#0f0'], ['pivot', 'Sell/Pivot', 1692, '#ff69b4']
];
document.getElementById('levels').innerHTML = levels.map(([k, t, y, c]) =>
  `<span class="level ${k}" style="top:${(y - 153) / 16.29}%${c ? `;color:${c}` : ''}">${t}</span>`).join('');

let rows = '';
for (let n = 0; n < 33; n++) rows += `<li>${(2530.8 - 1.05 * n).toFixed(2)}</li>`;
document.getElementById('prices').innerHTML = rows + `<li class="last" style="top:${(563 - 153) / 16.6}%">2522.70</li>`;

let cols = '<li>29 Aug 2024</li>';
for (let n = 0; n < 25; n++) {
  const m = 12 * 60 + 47 + 16 * n;
  cols += `<li>29 Aug ${Math.floor(m / 60)}:${String(m % 60).padStart(2, '0')}</li>`;
}
document.getElementById('times').innerHTML = cols;
```
